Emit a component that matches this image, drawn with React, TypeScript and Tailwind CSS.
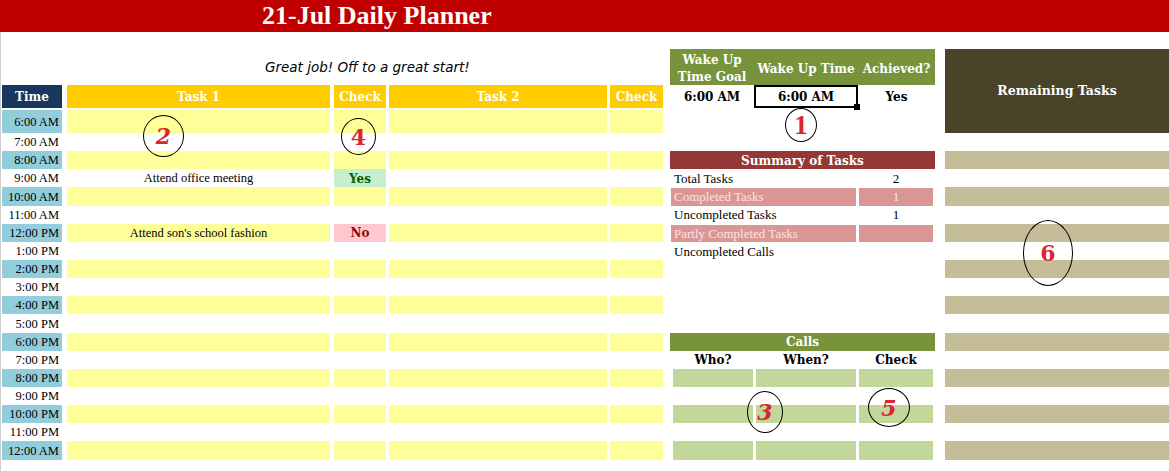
import React from 'react';

const serif = "font-['Liberation_Serif',serif]";
const slab = "font-['DejaVu_Serif',serif] font-bold";

const hours = [
  '6:00 AM', '7:00 AM', '8:00 AM', '9:00 AM', '10:00 AM', '11:00 AM', '12:00 PM',
  '1:00 PM', '2:00 PM', '3:00 PM', '4:00 PM', '5:00 PM', '6:00 PM', '7:00 PM',
  '8:00 PM', '9:00 PM', '10:00 PM', '11:00 PM', '12:00 AM',
];

const tasks: Record<number, { text: string; check: 'Yes' | 'No' }> = {
  3: { text: 'Attend office meeting', check: 'Yes' },
  6: { text: "Attend son's school fashion", check: 'No' },
};

const summary: Record<number, { label: string; value: string; pink?: boolean }> = {
  3: { label: 'Total Tasks', value: '2' },
  4: { label: 'Completed Tasks', value: '1', pink: true },
  5: { label: 'Uncompleted Tasks', value: '1' },
  6: { label: 'Partly Completed Tasks', value: '', pink: true },
  7: { label: 'Uncompleted Calls', value: '' },
};

// annotation circles laid over the sheet
const marks = [
  { n: '1', x: 785, y: 108, w: 32, h: 34, italic: false, plain: true },
  { n: '2', x: 143, y: 115, w: 41, h: 42, italic: true, plain: false },
  { n: '4', x: 341, y: 118, w: 35, h: 37, italic: false, plain: false },
  { n: '3', x: 747, y: 391, w: 36, h: 42, italic: true, plain: false },
  { n: '5', x: 868, y: 388, w: 42, h: 39, italic: true, plain: false },
  { n: '6', x: 1023, y: 220, w: 50, h: 66, italic: false, plain: false },
];

function LeftCells({ i }: { i: number }) {
  const shaded = i % 2 === 0;
  const fill = shaded ? 'bg-[#ffff99]' : '';
  const task = tasks[i];
  const checkStyle = task
    ? task.check === 'Yes'
      ? 'bg-[#c6efce] text-[#006100]'
      : 'bg-[#ffc7ce] text-[#9c0006]'
    : fill;

  return (
    <>
      <div
        className={`w-[60px] flex items-center justify-end pr-[3px] pt-[1px] text-[12.5px] text-black ${serif} ${
          shaded ? 'bg-[#92cddc]' : ''
        }`}
      >
        {hours[i]}
      </div>
      <div className={`ml-[5px] w-[263px] flex items-center justify-center pt-[1px] text-[12.5px] text-black ${serif} ${fill}`}>
        {task?.text}
      </div>
      <div className={`ml-[4px] w-[52px] flex items-center justify-center pt-[1px] text-[12px] ${slab} ${checkStyle}`}>
        {task?.check}
      </div>
      <div className={`ml-[3px] w-[218px] ${fill}`} />
      <div className={`ml-[3px] w-[53px] ${fill}`} />
    </>
  );
}

function Middle({ i }: { i: number }) {
  if (i === 2) {
    return (
      <div className={`w-full bg-[#953735] flex items-center justify-center pt-[1px] text-white text-[12px] ${slab}`}>
        Summary of Tasks
      </div>
    );
  }
  const s = summary[i];
  if (s) {
    const fill = s.pink ? 'bg-[#da9694] text-[#f8e4e3]' : 'text-black';
    return (
      <div className={`flex w-full pt-[1px] text-[13px] ${serif}`}>
        <div className={`ml-[1px] w-[185px] flex items-center pl-[3px] ${fill}`}>{s.label}</div>
        <div className={`ml-[3px] w-[74px] flex items-center justify-center ${fill}`}>{s.value}</div>
      </div>
    );
  }
  if (i === 12) {
    return (
      <div className={`w-full bg-[#77933c] flex items-center justify-center pt-[1px] text-white text-[12px] ${slab}`}>
        Calls
      </div>
    );
  }
  if (i === 13) {
    return (
      <div className={`flex w-full pt-[1px] text-[12px] text-black ${slab}`}>
        <div className="ml-[3px] w-[80px] flex items-center justify-center">Who?</div>
        <div className="ml-[3px] w-[100px] flex items-center justify-center">When?</div>
        <div className="ml-[3px] w-[74px] flex items-center justify-center">Check</div>
      </div>
    );
  }
  if (i >= 14 && i % 2 === 0) {
    return (
      <div className="flex w-full">
        <div className="ml-[3px] w-[80px] bg-[#c4d79b]" />
        <div className="ml-[3px] w-[100px] bg-[#c4d79b]" />
        <div className="ml-[3px] w-[74px] bg-[#c4d79b]" />
      </div>
    );
  }
  return null;
}

export default function App() {
  return (
    <div className="relative w-[1169px] h-[471px] bg-white overflow-hidden">
      {/* Title bar */}
      <div className="h-[32px] bg-[#c00000] flex items-center pl-[262px]">
        <span className={`text-white text-[26px] font-bold leading-none ${serif}`}>21-Jul Daily Planner</span>
      </div>

      <div className="border-l border-[#cfcfcf] pl-[1px] h-[439px]">
        <div className="h-[17px]" />

        {/* Top block: message, headers, wake up, remaining tasks */}
        <div className="flex">
          <div className="w-[933px]">
            <div className="flex h-[36px]">
              <div className="w-[661px] flex items-center pl-[263px]">
                <span className="italic text-[13.5px] text-black font-['DejaVu_Sans',sans-serif]">
                  Great job! Off to a great start!
                </span>
              </div>
              <div className={`ml-[7px] w-[265px] flex bg-[#77933c] pt-[3px] text-white text-[12px] ${slab}`}>
                <div className="w-[84px] flex items-center justify-center text-center leading-[17px]">
                  Wake Up
                  <br />
                  Time Goal
                </div>
                <div className="w-[104px] flex items-center justify-center">Wake Up Time</div>
                <div className="w-[77px] flex items-center justify-center">Achieved?</div>
              </div>
            </div>

            <div className="flex h-[23px]">
              <div className={`w-[60px] bg-[#17375e] flex items-center justify-center text-white text-[12px] ${slab}`}>
                Time
              </div>
              <div className={`ml-[5px] w-[263px] bg-[#ffcc00] flex items-center justify-center text-white text-[12px] ${slab}`}>
                Task 1
              </div>
              <div className={`ml-[4px] w-[52px] bg-[#ffcc00] flex items-center justify-center text-white text-[12px] ${slab}`}>
                Check
              </div>
              <div className={`ml-[3px] w-[218px] bg-[#ffcc00] flex items-center justify-center text-white text-[12px] ${slab}`}>
                Task 2
              </div>
              <div className={`ml-[3px] w-[53px] bg-[#ffcc00] flex items-center justify-center text-white text-[12px] ${slab}`}>
                Check
              </div>
              <div className={`ml-[7px] w-[265px] flex text-black text-[12px] ${slab}`}>
                <div className="w-[84px] flex items-center justify-center">6:00 AM</div>
                <div className="relative w-[104px] border-2 border-black flex items-center justify-center">
                  6:00 AM
                  <div className="absolute -right-[4px] -bottom-[4px] w-[6px] h-[6px] bg-black" />
                </div>
                <div className="w-[77px] flex items-center justify-center">Yes</div>
              </div>
            </div>

            <div className="flex h-[25px] pt-[2px]">
              <LeftCells i={0} />
            </div>
          </div>

          <div className={`ml-[10px] w-[224px] h-[84px] bg-[#494429] flex items-center justify-center text-white text-[12.5px] ${slab}`}>
            Remaining Tasks
          </div>
        </div>

        {/* Hour rows */}
        {hours.slice(1).map((_, k) => {
          const i = k + 1;
          return (
            <div key={i} className="flex h-[18.15px]">
              <LeftCells i={i} />
              <div className="ml-[7px] w-[265px] flex">
                <Middle i={i} />
              </div>
              <div className={`ml-[10px] w-[224px] ${i % 2 === 0 ? 'bg-[#c4bd97]' : ''}`} />
            </div>
          );
        })}
      </div>

      {marks.map((m) => (
        <div
          key={m.n}
          className="absolute rounded-[50%] border border-black flex items-center justify-center"
          style={{ left: m.x, top: m.y, width: m.w, height: m.h }}
        >
          <span
            className={`text-[#d8262e] leading-none ${
              m.plain
                ? "font-['Liberation_Serif',serif] font-bold text-[27px]"
                : "font-['DejaVu_Serif',serif] font-bold text-[22px]"
            } ${m.italic ? 'italic' : ''}`}
          >
            {m.n}
          </span>
        </div>
      ))}
    </div>
  );
}
